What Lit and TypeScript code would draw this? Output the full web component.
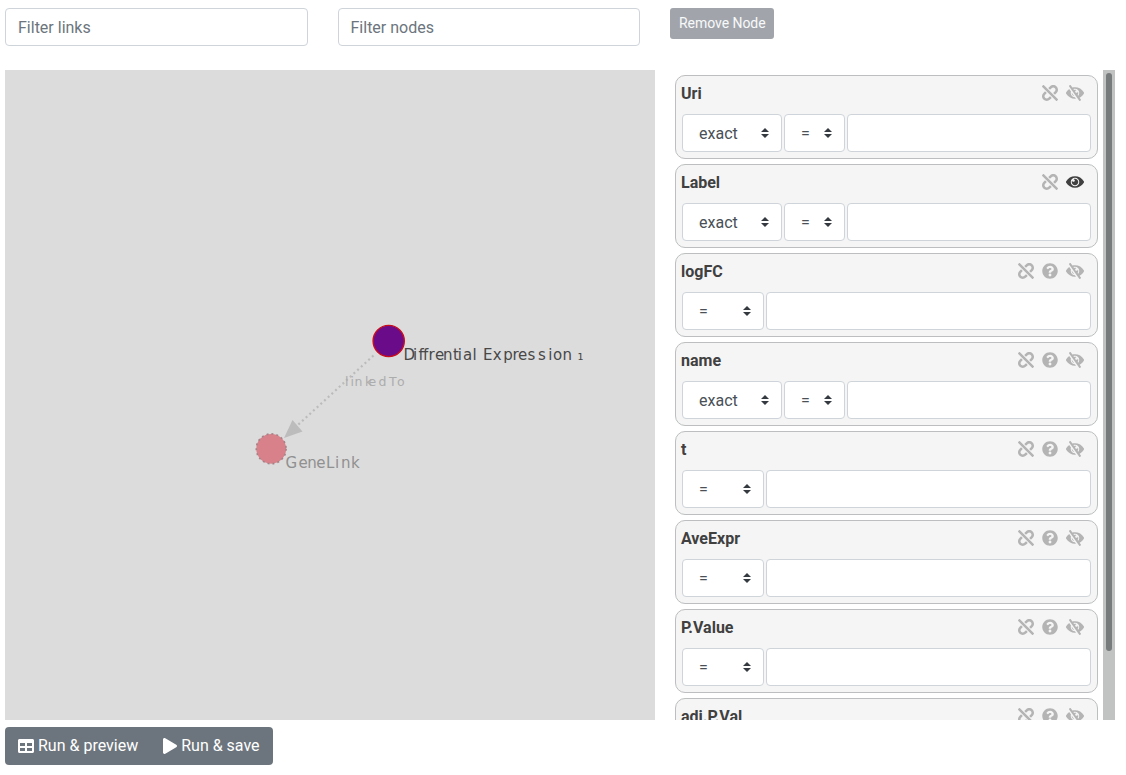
import { LitElement, html, svg, css } from "lit";
import { customElement, property } from "lit/decorators.js";

const ICONS: Record<string, { w: number; d: string }> = {
  unlink: { w: 512, d: "M304.083 405.907c4.686 4.686 4.686 12.284 0 16.971l-44.674 44.674c-59.263 59.262-155.693 59.266-214.961 0-59.264-59.265-59.264-155.696 0-214.96l44.675-44.675c4.686-4.686 12.284-4.686 16.971 0l39.598 39.598c4.686 4.686 4.686 12.284 0 16.971l-44.675 44.674c-28.072 28.073-28.072 73.75 0 101.823 28.072 28.072 73.75 28.073 101.824 0l44.674-44.674c4.686-4.686 12.284-4.686 16.971 0l39.597 39.598zm-56.568-260.216c4.686 4.686 12.284 4.686 16.971 0l44.674-44.674c28.072-28.075 73.75-28.073 101.824 0 28.072 28.073 28.072 73.75 0 101.823l-44.675 44.674c-4.686 4.686-4.686 12.284 0 16.971l39.598 39.598c4.686 4.686 12.284 4.686 16.971 0l44.675-44.675c59.263-59.265 59.263-155.695 0-214.961-59.265-59.264-155.695-59.264-214.96 0l-44.674 44.674c-4.686 4.686-4.686 12.284 0 16.971l39.597 39.599zm234.828 359.28l22.627-22.627c9.373-9.373 9.373-24.569 0-33.941L63.598 7.029c-9.373-9.373-24.569-9.373-33.941 0L7.029 29.657c-9.373 9.373-9.373 24.569 0 33.941l441.373 441.373c9.373 9.372 24.569 9.372 33.941 0z" },
  question: { w: 512, d: "M504 256c0 136.997-111.043 248-248 248S8 392.997 8 256C8 119.083 119.043 8 256 8s248 111.083 248 248zM262.655 90c-54.497 0-89.255 22.957-116.549 63.758-3.536 5.286-2.353 12.415 2.715 16.258l34.699 26.31c5.205 3.947 12.621 3.008 16.665-2.122 17.864-22.658 30.113-35.797 57.303-35.797 20.429 0 45.698 13.148 45.698 32.958 0 14.976-12.363 22.667-32.534 33.976C247.128 238.528 216 254.941 216 296v4c0 6.627 5.373 12 12 12h56c6.627 0 12-5.373 12-12v-1.333c0-28.462 83.186-29.647 83.186-106.667 0-58.002-60.165-102-116.531-102zM256 338c-25.365 0-46 20.635-46 46 0 25.364 20.635 46 46 46s46-20.636 46-46c0-25.365-20.635-46-46-46z" },
  eye: { w: 576, d: "M569.354 231.631C512.969 135.949 407.81 72 288 72 168.14 72 63.004 135.994 6.646 231.631a47.999 47.999 0 0 0 0 48.739C63.031 376.051 168.19 440 288 440c119.86 0 224.996-63.994 281.354-159.631a47.997 47.997 0 0 0 0-48.738zM288 392c-75.162 0-136-60.827-136-136 0-75.162 60.826-136 136-136 75.162 0 136 60.826 136 136 0 75.162-60.826 136-136 136zm104-136c0 57.438-46.562 104-104 104s-104-46.562-104-104c0-17.708 4.431-34.379 12.236-48.973l-.001.032c0 23.651 19.173 42.823 42.824 42.823s42.824-19.173 42.824-42.823c0-23.651-19.173-42.824-42.824-42.824l-.032.001C253.621 156.431 270.292 152 288 152c57.438 0 104 46.562 104 104z" },
  eyeSlash: { w: 576, d: "M286.693 391.984l32.579 46.542A333.958 333.958 0 0 1 288 440C168.19 440 63.031 376.051 6.646 280.369a47.999 47.999 0 0 1 0-48.739c24.023-40.766 56.913-75.775 96.024-102.537l57.077 81.539C154.736 224.82 152 240.087 152 256c0 74.736 60.135 135.282 134.693 135.984zm282.661-111.615c-31.667 53.737-78.747 97.46-135.175 125.475l.011.015 41.47 59.2c7.6 10.86 4.96 25.82-5.9 33.42l-13.11 9.18c-10.86 7.6-25.82 4.96-33.42-5.9L100.34 46.94c-7.6-10.86-4.96-25.82 5.9-33.42l13.11-9.18c10.86-7.6 25.82-4.96 33.42 5.9l51.038 72.617C230.68 75.776 258.905 72 288 72c119.81 0 224.969 63.949 281.354 159.631a48.002 48.002 0 0 1 0 48.738zM424 256c0-75.174-60.838-136-136-136-17.939 0-35.056 3.473-50.729 9.772l19.299 27.058c25.869-8.171 55.044-6.163 80.4 7.41h-.03c-23.65 0-42.82 19.17-42.82 42.82 0 23.626 19.147 42.82 42.82 42.82 23.65 0 42.82-19.17 42.82-42.82v-.03c18.462 34.49 16.312 77.914-8.25 110.95v.01l19.314 27.061C411.496 321.2 424 290.074 424 256zM262.014 356.727l-77.53-110.757c-5.014 52.387 29.314 98.354 77.53 110.757z" },
  table: { w: 512, d: "M464 32H48C21.49 32 0 53.49 0 80v352c0 26.51 21.49 48 48 48h416c26.51 0 48-21.49 48-48V80c0-26.51-21.49-48-48-48zM224 416H64v-96h160v96zm0-160H64v-96h160v96zm224 160H288v-96h160v96zm0-160H288v-96h160v96z" },
  play: { w: 448, d: "M424.4 214.7L72.4 6.6C43.8-10.3 0 6.1 0 47.9V464c0 37.5 40.7 60.1 72.4 41.3l352-208c31.4-18.5 31.5-64.1 0-82.6z" },
};

const icon = (name: string, cls = "") => {
  const i = ICONS[name];
  return html`<svg class="icon ${cls}" viewBox="0 0 ${i.w} 512" width=${i.w / 32} height="16">
    <path fill="currentColor" d=${i.d}></path>
  </svg>`;
};

const FONT = css`"Roboto", "Liberation Sans", sans-serif`;

@customElement("attribute-card")
class AttributeCard extends LitElement {
  @property() label = "";
  @property({ type: Boolean }) numeric = false;
  @property({ type: Boolean }) optional = false;
  @property({ type: Boolean }) shown = false;

  static styles = css`
    :host { display: block; box-sizing: border-box; height: 84px; padding: 5px; border: 1px solid #bcbebf;
      border-radius: 10px; background: #f5f5f5; flex: none; font: 16px/24px ${FONT}; color: #404040; }
    .head { display: flex; justify-content: space-between; align-items: center; height: 24px; }
    .title { font-weight: 700; padding-top: 2px; }
    .icons { display: flex; gap: 8px; padding-right: 8px; color: #b4b4b4; }
    .icon { display: block; }
    .active { color: #404040; }
    .row { display: flex; gap: 2px; padding: 9px 1px 0; }
    .box { box-sizing: border-box; height: 38px; border: 1px solid #ced4da; border-radius: 4px; background: #fff; color: #495057; }
    .select { display: flex; align-items: center; justify-content: space-between; padding: 0 12px 0 16px; }
    .select span { padding-top: 2px; }
    .text { width: 100px; }
    .sign { width: 61px; }
    .wide { width: 82px; }
    .value { flex: 1; }
  `;

  select(text: string, cls: string) {
    return html`<div class="box select ${cls}"><span>${text}</span>
      <svg width="8" height="10" viewBox="0 0 4 5"><path fill="#343a40" d="M2 0L0 2h4zm0 5L0 3h4z"></path></svg></div>`;
  }

  render() {
    return html`
      <div class="head">
        <span class="title">${this.label}</span>
        <div class="icons">
          ${icon("unlink")}
          ${this.optional ? icon("question") : ""}
          ${this.shown ? icon("eye", "active") : icon("eyeSlash")}
        </div>
      </div>
      <div class="row">
        ${this.numeric ? this.select("=", "wide") : [this.select("exact", "text"), this.select("=", "sign")]}
        <div class="box value"></div>
      </div>`;
  }
}

const ATTRIBUTES = [
  { label: "Uri" },
  { label: "Label", shown: true },
  { label: "logFC", numeric: true, optional: true },
  { label: "name", optional: true },
  { label: "t", numeric: true, optional: true },
  { label: "AveExpr", numeric: true, optional: true },
  { label: "P.Value", numeric: true, optional: true },
  { label: "adj.P.Val", numeric: true, optional: true },
] as { label: string; shown?: boolean; numeric?: boolean; optional?: boolean }[];

@customElement("app-root")
class AppRoot extends LitElement {
  static styles = css`
    :host { display: block; box-sizing: border-box; height: 775px; padding: 8px 11px 0 5px; overflow: hidden;
      background: #fff; font: 16px/24px ${FONT}; }
    .filters { display: flex; gap: 30px; align-items: flex-start; height: 62px; }
    .filter { box-sizing: border-box; width: 302.5px; height: 38px; padding: 7px 12px 5px; border: 1px solid #ced4da;
      border-radius: 4px; color: #6c757d; }
    .remove { box-sizing: border-box; width: 104px; height: 31px; padding: 5px 0 5px 9px; border-radius: 3px; background: #a1a5ab; color: #f8f9fa;
      font-size: 14px; line-height: 21px; white-space: nowrap; letter-spacing: -0.05px; }
    .main { display: flex; height: 650px; }
    .graph { display: block; width: 650px; height: 650px; background: #dcdcdc; }
    .panel { display: flex; flex: 1; margin-left: 15px; overflow: hidden; }
    .cards { display: flex; flex-direction: column; flex: 1; gap: 5px; padding: 5px; overflow: hidden; }
    .track { box-sizing: border-box; width: 12px; padding: 3px; background: #c1c3c2; }
    .thumb { height: 578px; border-radius: 3px; background: #777b7b; }
    .actions { display: inline-flex; margin-top: 7px; height: 38px; border-radius: 4px; background: #6c757d; color: #fff; }
    .action { display: flex; align-items: center; gap: 4px; padding: 0 13px; }
    .action + .action { padding-left: 12px; }
    text { font-family: "DejaVu Sans", sans-serif; }
  `;

  graph() {
    return svg`
      <line x1="368.5" y1="285.5" x2="282" y2="365" stroke="#bbb" stroke-width="2.2" stroke-dasharray="2 3"></line>
      <path d="M283 368L291.5 350L301.5 361.5Z" transform="translate(-4 0)" fill="#bcbcbc"></path>
      <circle cx="266.2" cy="378.8" r="14.9" fill="#d9818a" stroke="#a58287" stroke-width="1.6" stroke-dasharray="2 3"></circle>
      <circle cx="383.7" cy="271" r="15.6" fill="#6a0b8a" stroke="#c80d1c" stroke-width="1.4"></circle>
      <text x="398.6 408 413.5 418 423.5 430 438 448 452.7 458 467.5 471.5 478 487.7 498.3 507.5 513 522.6 533 543.3 548 557.4 567 572.5" y="290" font-size="15" fill="#484848">Diffrential Expression ₁</text>
      <text x="280.5 293.6 302.3 311.2 321 330 336 346" y="398" font-size="15" fill="#909090">GeneLink</text>
      <text x="340 345.5 349.5 360 363.5 373.5 384 392" y="316" font-size="12.5" fill="#acacac">linkedTo</text>`;
  }

  render() {
    return html`
      <div class="filters">
        <div class="filter">Filter links</div>
        <div class="filter">Filter nodes</div>
        <div class="remove">Remove Node</div>
      </div>
      <div class="main">
        <svg class="graph" viewBox="0 0 650 650">${this.graph()}</svg>
        <div class="panel">
          <div class="cards">
            ${ATTRIBUTES.map((a) => html`<attribute-card .label=${a.label} .numeric=${!!a.numeric}
              .optional=${!!a.optional} .shown=${!!a.shown}></attribute-card>`)}
          </div>
          <div class="track"><div class="thumb"></div></div>
        </div>
      </div>
      <div class="actions">
        <div class="action">${icon("table")}<span>Run &amp; preview</span></div>
        <div class="action">${icon("play")}<span>Run &amp; save</span></div>
      </div>`;
  }
}
